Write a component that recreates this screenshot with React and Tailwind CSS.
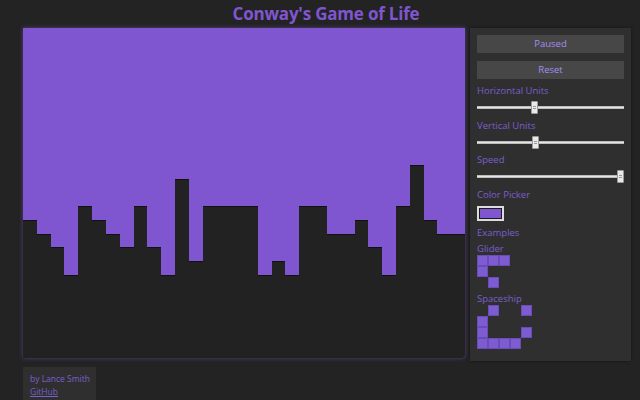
import React from 'react';

// column heights (alive cells counted from the bottom), 32 columns x 24 rows
const heights = [10, 9, 8, 6, 11, 10, 9, 8, 11, 8, 6, 13, 7, 11, 11, 11, 11, 6, 7, 6, 11, 11, 9, 9, 10, 8, 6, 11, 14, 10, 9, 9];
const ROWS = 24;

const glider = ['###', '#..', '.#.'];
const spaceship = ['.#..#', '#....', '#...#', '####.'];

function Slider({ pos }) {
    return (
        <div className="relative h-[20px] flex items-center">
            <div className="w-full h-[3px] bg-[#e4e4e4] border-y border-[#bdbdbd]" />
            <div
                className="absolute top-[4px] w-[7px] h-[13px] bg-[#e9e9e9] border border-[#9a9a9a] rounded-[1px] flex flex-col items-center justify-center gap-[1px]"
                style={{ left: pos }}
            >
                <div className="w-[3px] h-px bg-[#9a9a9a]" />
                <div className="w-[3px] h-px bg-[#9a9a9a]" />
            </div>
        </div>
    );
}

function Pattern({ rows }) {
    return (
        <div className="flex flex-col">
            {rows.map((r, i) => (
                <div key={i} className="flex">
                    {r.split('').map((c, j) => (
                        <div key={j} className={`w-[11px] h-[11px] ${c === '#' ? 'bg-[#7d5bd0] border border-[#6a4bb8]' : ''}`} />
                    ))}
                </div>
            ))}
        </div>
    );
}

export default function App() {
    return (
        <div className="w-[640px] h-[400px] bg-[#232323] flex flex-col overflow-hidden" style={{ fontFamily: '"Open Sans", "Noto Sans", sans-serif' }}>

            {/* TITLE */}
            <div className="h-[26px] pl-[12px] flex items-center justify-center shrink-0">
                <h1 className="text-[17px] font-bold text-[#7f56d0] leading-none tracking-[-0.2px]">Conway's Game of Life</h1>
            </div>

            <div className="flex items-start pt-[2px] pl-[23px] gap-[5px]">

                {/* BOARD */}
                <div className="w-[442px] h-[330px] flex rounded-br-[3px] overflow-hidden shadow-[0_0_4px_rgba(127,86,208,0.55)] bg-[#7f56d0]">
                    {heights.map((h, i) => (
                        <div key={i} className="flex-1 flex flex-col">
                            {Array.from({ length: ROWS }).map((_, r) => {
                                const alive = r >= ROWS - h;
                                const top = r === ROWS - h;
                                return (
                                    <div
                                        key={r}
                                        className={`flex-1 ${alive ? 'bg-[#222222]' : 'bg-[#7f56d0]'} ${top ? 'border-t border-[#111111]' : ''}`}
                                    />
                                );
                            })}
                        </div>
                    ))}
                </div>

                {/* CONTROLS */}
                <div className="w-[161px] h-[333px] bg-[#2f2f2f] px-[7px] pt-[7px] flex flex-col text-[#7b5fcd] text-[9.5px] leading-[12px] shadow-[0_0_3px_rgba(0,0,0,0.4)]">
                    <button className="h-[18px] bg-[#474747] text-[#a58ef0] text-[9.5px] flex items-center justify-center">Paused</button>
                    <button className="h-[18px] mt-[8px] bg-[#474747] text-[#a58ef0] text-[9.5px] flex items-center justify-center">Reset</button>

                    <div className="mt-[6px]">Horizontal Units</div>
                    <Slider pos={54} />

                    <div className="mt-[3px]">Vertical Units</div>
                    <Slider pos={55} />

                    <div className="mt-[2px]">Speed</div>
                    <Slider pos={140} />

                    <div className="mt-[3px]">Color Picker</div>
                    <div className="mt-[5px] w-[27px] h-[15px] border-2 border-[#dcdcdc] bg-[#1c1c1c] p-px">
                        <div className="w-full h-full bg-[#7f56d0]" />
                    </div>

                    <div className="mt-[6px]">Examples</div>
                    <div className="mt-[4px]">Glider</div>
                    <Pattern rows={glider} />

                    <div className="mt-[5px]">Spaceship</div>
                    <Pattern rows={spaceship} />
                </div>
            </div>

            {/* FOOTER */}
            <div className="ml-[23px] mt-[6px] w-[73px] bg-[#2f2f2f] px-[7px] pt-[5px] pb-[4px] text-[#7b5fcd] text-[8.5px] leading-[13px] whitespace-nowrap">
                <div>by Lance Smith</div>
                <a className="underline">GitHub</a>
            </div>
        </div>
    );
}
